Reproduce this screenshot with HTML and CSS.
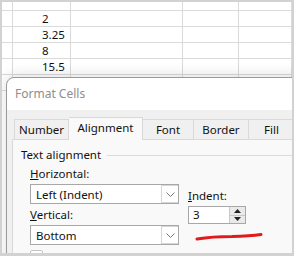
FILE: index.html
```html
<!DOCTYPE html>
<html lang="en">
<head>
    <meta charset="UTF-8">
    <title>Format Cells</title>
    <link rel="stylesheet" href="styles.css">
</head>
<body>
    <div class="frame">
        <div class="sheet">
            <div class="row first"><div></div><div></div><div></div><div></div><div></div></div>
            <div class="row"><div></div><div class="num">2</div><div></div><div></div><div></div></div>
            <div class="row"><div></div><div class="num">3.25</div><div></div><div></div><div></div></div>
            <div class="row"><div></div><div class="num">8</div><div></div><div></div><div></div></div>
            <div class="row"><div></div><div class="num">15.5</div><div></div><div></div><div></div></div>
            <div class="row"><div></div><div></div><div></div><div></div><div></div></div>
        </div>

        <div class="dialog">
            <div class="title">Format Cells</div>
            <div class="dialog-body">
                <div class="tabs">
                    <div class="tab tab-number">Number</div>
                    <div class="tab tab-align active">Alignment</div>
                    <div class="tab tab-font">Font</div>
                    <div class="tab tab-border">Border</div>
                    <div class="tab tab-fill">Fill</div>
                </div>
                <div class="panel">
                    <div class="legend">Text alignment</div>
                    <div class="group">
                        <div class="col-left">
                            <div class="label"><u>H</u>orizontal:</div>
                            <div class="select">
                                <span>Left (Indent)</span>
                                <span class="chevron">
                                    <svg width="9" height="5" viewBox="0 0 9 5"><path d="M0.5 0.5 L4.5 4.5 L8.5 0.5" fill="none" stroke="#7a7a7a" stroke-width="1"/></svg>
                                </span>
                            </div>
                            <div class="label"><u>V</u>ertical:</div>
                            <div class="select">
                                <span>Bottom</span>
                                <span class="chevron">
                                    <svg width="9" height="5" viewBox="0 0 9 5"><path d="M0.5 0.5 L4.5 4.5 L8.5 0.5" fill="none" stroke="#7a7a7a" stroke-width="1"/></svg>
                                </span>
                            </div>
                            <div class="check-row">
                                <span class="checkbox"></span>
                                <span class="check-text">Justify distributed</span>
                            </div>
                        </div>
                        <div class="col-right">
                            <div class="label"><u>I</u>ndent:</div>
                            <div class="spinner">
                                <span class="value">3</span>
                                <span class="spin">
                                    <span class="spin-btn"><svg width="7" height="4" viewBox="0 0 7 4"><path d="M3.5 0 L7 4 L0 4 Z" fill="#222"/></svg></span>
                                    <span class="spin-btn"><svg width="7" height="4" viewBox="0 0 7 4"><path d="M0 0 L7 0 L3.5 4 Z" fill="#222"/></svg></span>
                                </span>
                            </div>
                        </div>
                    </div>
                </div>
            </div>
        </div>

        <svg class="scribble" width="294" height="256" viewBox="0 0 294 256">
            <path d="M197 239 Q 212 236.5 232 236.5 Q 250 236 261 234.5" fill="none" stroke="#e11b1b" stroke-width="3" stroke-linecap="round"/>
        </svg>
    </div>
</body>
</html>
```

FILE: styles.css
```css
body {
    margin: 0;
    background-color: white;
}
.frame {
    position: relative;
    width: 294px;
    height: 256px;
    box-sizing: border-box;
    border: 2px solid #d2d2d2;
    border-bottom-width: 3px;
    overflow: hidden;
    background-color: white;
}
.sheet {
    font-family: "Noto Sans", sans-serif;
    font-size: 11.5px;
    color: #111;
}
.row {
    display: grid;
    grid-template-columns: 11px 58px 112px 56px 1fr;
    height: 16px;
}
.row.first {
    height: 9px;
}
.row > div {
    box-sizing: border-box;
    border-right: 1px solid #dadada;
    border-bottom: 1px solid #dadada;
}
.num {
    padding-left: 29px;
    line-height: 15px;
}
.dialog {
    position: absolute;
    left: 4px;
    top: 75px;
    right: -12px;
    bottom: -20px;
    border: 1px solid #9a9a9a;
    border-top-left-radius: 8px;
    background-color: #f0f0f0;
    box-shadow: 0 -2px 14px rgba(0, 0, 0, 0.13);
    font-family: "Segoe UI", "Noto Sans", sans-serif;
    font-size: 11.5px;
    color: #111;
    overflow: hidden;
}
.title {
    background-color: white;
    height: 32px;
    line-height: 32px;
    padding-left: 8px;
    font-size: 12px;
    color: #8e8e8e;
    border-top-left-radius: 8px;
}
.dialog-body {
    padding-top: 7px;
}
.tabs {
    display: flex;
    align-items: flex-end;
    margin-left: 7px;
    height: 22px;
    position: relative;
    z-index: 1;
}
.tab {
    box-sizing: border-box;
    height: 20px;
    line-height: 19px;
    text-align: center;
    border: 1px solid #d9d9d9;
    border-left: none;
    border-bottom: none;
    background-color: #f0f0f0;
}
.tab-number {
    width: 55px;
    border-left: 1px solid #d9d9d9;
}
.tab-align {
    width: 74px;
}
.tab-font {
    width: 51px;
}
.tab-border {
    width: 55px;
}
.tab-fill {
    width: 50px;
    text-align: left;
    padding-left: 15px;
}
.tab.active {
    height: 23px;
    margin-bottom: -1px;
    line-height: 20px;
    background-color: #f9f9f9;
    border-left: 1px solid #d9d9d9;
}
.tab-number + .tab.active {
    border-left: none;
}
.panel {
    margin-left: 5px;
    height: 140px;
    border: 1px solid #d9d9d9;
    background-color: #f9f9f9;
    padding: 7px 0 0 8px;
}
.legend {
    display: flex;
    align-items: center;
    line-height: 16px;
}
.legend::after {
    content: "";
    flex: 1;
    height: 1px;
    margin-left: 6px;
    background-color: #dcdcdc;
}
.group {
    display: flex;
    gap: 9px;
    margin-top: 3px;
    margin-left: 9px;
}
.col-left {
    width: 149px;
}
.col-right {
    margin-top: 22px;
}
.label {
    line-height: 16px;
}
.select {
    display: flex;
    align-items: center;
    justify-content: space-between;
    box-sizing: border-box;
    height: 20px;
    margin-top: 2px;
    margin-bottom: 3px;
    padding-left: 5px;
    border: 1px solid #a8a8a8;
    background-color: white;
}
.chevron {
    display: flex;
    align-items: center;
    justify-content: center;
    box-sizing: border-box;
    width: 17px;
    height: 18px;
    border: 1px solid #d6d6d6;
    border-right: none;
}
.chevron svg {
    display: block;
}
.check-row {
    display: flex;
    align-items: center;
    gap: 6px;
    margin-top: 4px;
    color: #b0b0b0;
}
.checkbox {
    width: 11px;
    height: 11px;
    border: 1px solid #c4c4c4;
    border-radius: 2px;
    background-color: white;
}
.spinner {
    display: flex;
    box-sizing: border-box;
    width: 58px;
    height: 18px;
    margin-top: 2px;
    border: 1px solid #a8a8a8;
    background-color: white;
}
.value {
    flex: 1;
    padding-left: 4px;
    line-height: 16px;
}
.spin {
    display: flex;
    flex-direction: column;
    width: 15px;
    border-left: 1px solid #c8c8c8;
}
.spin-btn {
    flex: 1;
    display: flex;
    align-items: center;
    justify-content: center;
    background-color: #eaeaea;
}
.spin-btn + .spin-btn {
    border-top: 1px solid #c8c8c8;
}
.spin-btn svg {
    display: block;
}
.scribble {
    position: absolute;
    left: -2px;
    top: -2px;
    pointer-events: none;
}
```
